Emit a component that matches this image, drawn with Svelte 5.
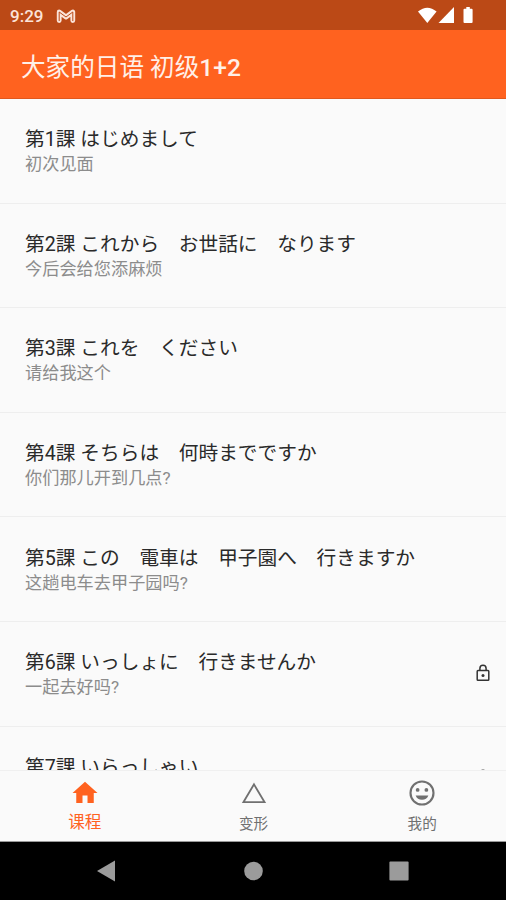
<script lang="ts">
    const lessons = [
        { title: '第1課 はじめまして', sub: '初次见面', locked: false },
        { title: '第2課 これから　お世話に　なります', sub: '今后会给您添麻烦', locked: false },
        { title: '第3課 これを　ください', sub: '请给我这个', locked: false },
        { title: '第4課 そちらは　何時までですか', sub: '你们那儿开到几点?', locked: false },
        { title: '第5課 この　電車は　甲子園へ　行きますか', sub: '这趟电车去甲子园吗?', locked: false },
        { title: '第6課 いっしょに　行きませんか', sub: '一起去好吗?', locked: true },
        { title: '第7課 いらっしゃい', sub: '', locked: true },
    ]

    const tabs = [
        { key: 'lessons', label: '课程' },
        { key: 'forms', label: '变形' },
        { key: 'mine', label: '我的' },
    ]

    let current = $state('lessons')
</script>

<div class="screen">
    <div class="status-bar">
        <span class="clock">9:29</span>
        <svg class="mail" viewBox="0 0 20 16" width="20" height="16">
            <path d="M3.200 12.500V4L10 9 16.800 4v8.500" fill="none" stroke="#fbe3d8" stroke-width="4.800" stroke-linejoin="round" stroke-linecap="round" />
            <path d="M3.200 13V4L10 9 16.800 4v9" fill="none" stroke="#bb4916" stroke-width="1" />
        </svg>
        <svg class="signals" viewBox="0 0 56 18" width="56" height="18">
            <path d="M0 4.600Q9.300-3 18.600 4.600L9.300 16z" />
            <path d="M36 0v16H20.500z" />
            <path d="M46.500 1.700h1.800V0h3.500v1.700h1.800q1 0 1 1V15q0 1-1 1h-7.100q-1 0-1-1V2.700q0-1 1-1z" />
        </svg>
    </div>

    <header class="app-bar">
        <h1>大家的日语 初级<b>1+2</b></h1>
    </header>

    <main class="lessons">
        {#each lessons as lesson}
            <div class="lesson">
                <div class="text">
                    <div class="title" lang="ja">{lesson.title}</div>
                    <div class="sub">{lesson.sub}</div>
                </div>
                {#if lesson.locked}
                    <svg class="lock" viewBox="0 0 14 18" width="14" height="18">
                        <rect x="1.200" y="6.600" width="11.600" height="9.600" rx="0.800" />
                        <path d="M3.900 6.500V4.400a3.100 3.100 0 0 1 6.200 0v2.100" />
                        <circle cx="7" cy="11.400" r="1.500" />
                    </svg>
                {/if}
            </div>
        {/each}
    </main>

    <nav class="tabs">
        {#each tabs as tab}
            <button class="tab" class:active={current === tab.key} onclick={() => (current = tab.key)}>
                <svg viewBox="0 0 24 24" width="30" height="30">
                    {#if tab.key === 'lessons'}
                        <path d="M10 20v-6h4v6h5v-8h3L12 3 2 12h3v8z" />
                    {:else if tab.key === 'forms'}
                        <path d="M12 5.100L20.400 19.300H3.600z" fill="none" stroke="currentColor" stroke-width="1.500" />
                    {:else}
                        <circle cx="12" cy="12" r="9.200" fill="none" stroke="currentColor" stroke-width="1.700" />
                        <circle cx="8.500" cy="9.500" r="1.500" />
                        <circle cx="15.500" cy="9.500" r="1.500" />
                        <path d="M6.900 14h10.200a5.500 5.500 0 0 1-10.200 0z" />
                    {/if}
                </svg>
                <span>{tab.label}</span>
            </button>
        {/each}
    </nav>

    <div class="system-nav">
        <svg viewBox="0 0 20 22" width="20" height="22"><path d="M18 .5v21L0 11z" /></svg>
        <svg viewBox="0 0 20 22" width="20" height="22"><circle cx="10.500" cy="11" r="9.300" /></svg>
        <svg viewBox="0 0 20 22" width="20" height="22"><rect x=".4" y="1.400" width="19.200" height="19.200" rx="1" /></svg>
    </div>
</div>

<style>
    :global(body) {
        margin: 0;
    }

    .screen {
        display: flex;
        flex-direction: column;
        width: 100%;
        height: 100vh;
        overflow: hidden;
        background: #fafafa;
        font-family: Roboto, 'Noto Sans CJK SC', sans-serif;
    }

    .status-bar {
        display: flex;
        align-items: center;
        flex: none;
        box-sizing: border-box;
        height: 30px;
        padding: 1px 32px 0 10px;
        background: #bb4916;
        color: #fbe3d8;
    }

    .clock {
        width: 46px;
        font-size: 17px;
        font-weight: 500;
        line-height: 20px;
    }

    .signals {
        margin-left: auto;
        fill: #fff;
    }

    .app-bar {
        display: flex;
        align-items: center;
        flex: none;
        box-sizing: border-box;
        height: 69px;
        padding: 7px 21px 0;
        border-bottom: 1px solid #e0581d;
        background: #ff621f;
        color: #fff0e8;
    }

    h1 {
        margin: 0;
        font-size: 24.6px;
        font-weight: 400;
        line-height: 36px;
        white-space: nowrap;
    }

    h1 b {
        font-weight: 500;
    }

    .lessons {
        flex: 1;
        min-height: 0;
        overflow: hidden;
    }

    .lesson {
        display: flex;
        align-items: center;
        box-sizing: border-box;
        height: 104.6px;
        padding: 0 16px 0 25px;
        border-bottom: 1px solid #eee;
    }

    .text {
        flex: 1;
        padding-top: 3px;
        white-space: nowrap;
    }

    .title {
        font-family: Roboto, 'Noto Sans CJK JP', sans-serif;
        font-size: 19.7px;
        line-height: 28px;
        color: #2a2a2a;
    }

    .sub {
        height: 24px;
        font-size: 17.2px;
        line-height: 21px;
        color: #8c8c8c;
    }

    .lock {
        margin-bottom: 1px;
        fill: none;
        stroke: #333;
        stroke-width: 1.5;
    }

    .lock circle {
        fill: #333;
        stroke: none;
    }

    .tabs {
        display: flex;
        flex: none;
        box-sizing: border-box;
        height: 72px;
        border-top: 1px solid #f0f0f0;
        border-bottom: 1px solid #999;
    }

    .tab {
        display: flex;
        flex: 1;
        flex-direction: column;
        align-items: center;
        padding: 7px 0 0 1px;
        border: none;
        background: none;
        font-family: inherit;
        font-size: 14.6px;
        line-height: 32px;
        color: #707070;
        cursor: pointer;
    }

    .tab svg {
        fill: currentColor;
    }

    .tab.active {
        font-size: 16.6px;
        line-height: 29px;
        color: #ff621f;
    }

    .system-nav {
        display: flex;
        align-items: center;
        justify-content: center;
        gap: 126px;
        flex: none;
        height: 58px;
        background: #000;
        fill: #9b9b9b;
    }
</style>
